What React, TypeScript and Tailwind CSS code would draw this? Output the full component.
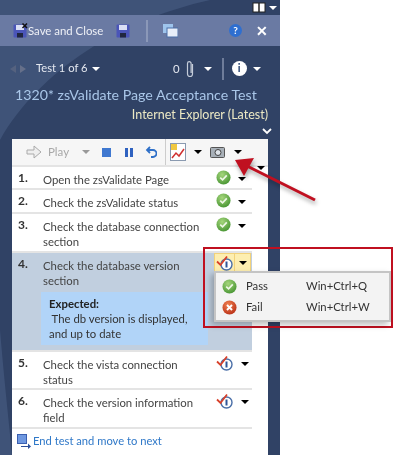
import React from 'react';

const FONT = "font-['Lato','Noto_Sans',sans-serif]";

const Caret = ({ className = '' }: { className?: string }) => (
    <span className={`inline-block w-0 h-0 border-x-[4px] border-x-transparent border-t-[4px] ${className}`} />
);

const PassIcon = ({ size = 15 }: { size?: number }) => (
    <svg className="shrink-0" width={size} height={size} viewBox="0 0 16 16">
        <defs>
            <radialGradient id="pass" cx="40%" cy="30%" r="80%">
                <stop offset="0%" stopColor="#a5d67c" />
                <stop offset="100%" stopColor="#3f8f2c" />
            </radialGradient>
        </defs>
        <circle cx="8" cy="8" r="7.5" fill="url(#pass)" />
        <path d="M4.5 8.2 7 10.5 11.5 5.8" fill="none" stroke="#eef7e6" strokeWidth="1.8" />
    </svg>
);

const FailIcon = () => (
    <svg className="shrink-0" width="15" height="15" viewBox="0 0 16 16">
        <defs>
            <radialGradient id="fail" cx="40%" cy="30%" r="80%">
                <stop offset="0%" stopColor="#f08050" />
                <stop offset="100%" stopColor="#b52a12" />
            </radialGradient>
        </defs>
        <circle cx="8" cy="8" r="7.5" fill="url(#fail)" />
        <path d="M5.3 5.3 10.7 10.7M10.7 5.3 5.3 10.7" stroke="#fff" strokeWidth="2" />
    </svg>
);

const ActiveIcon = () => (
    <svg className="shrink-0" width="18" height="16" viewBox="0 0 18 16">
        <circle cx="10.5" cy="9.5" r="5.5" fill="#fff" stroke="#4a6fa8" strokeWidth="1.4" />
        <path d="M10.5 6.500v6" stroke="#2f5597" strokeWidth="2" />
        <path d="M1 6.500 4.500 10 11 1.500" fill="none" stroke="#d8402a" strokeWidth="1.800" />
    </svg>
);

const DiskIcon = ({ closing = false }: { closing?: boolean }) => (
    <svg className="shrink-0" width="15" height="15" viewBox="0 0 15 15">
        <rect x="0.500" y="1.500" width="13" height="13" rx="1" fill="#4a55b8" />
        <rect x="3" y="2" width="8" height="5" fill="#d9def5" />
        <rect x="4" y="10" width="6" height="4.500" fill="#20263f" />
        {closing && <path d="M9.500 0.500 14 5M14 0.500 9.500 5" stroke="#111" strokeWidth="1.500" />}
    </svg>
);

interface Step {
    n: number;
    lines: string[];
    done: boolean;
}

const STEPS_TOP: Step[] = [
    { n: 1, lines: ['Open the zsValidate Page'], done: true },
    { n: 2, lines: ['Check the zsValidate status'], done: true },
    { n: 3, lines: ['Check the database connection', 'section'], done: true },
];

const STEPS_BOTTOM: Step[] = [
    { n: 5, lines: ['Check the vista connection', 'status'], done: false },
    { n: 6, lines: ['Check the version information', 'field'], done: false },
];

const StepRow: React.FC<{ step: Step; height: string }> = ({ step, height }) => (
    <div className={`flex ${height} border-b-2 border-[#e4e4e4] pt-[3px]`}>
        <span className="w-[31px] pl-[6px] text-[12px] leading-[15px] font-bold text-[#333]">{step.n}.</span>
        <div className="flex-1 leading-[15px] pt-[2px] text-[#444]">
            {step.lines.map(line => <div key={line}>{line}</div>)}
        </div>
        <div className="flex w-[40px] items-start pl-[4px] gap-[7px]">
            {step.done ? <PassIcon /> : <ActiveIcon />}
            <span className="pt-[1px] leading-none"><Caret className="border-t-black" /></span>
        </div>
    </div>
);

export default function App() {
    return (
        <div className={`relative flex h-[455px] w-[400px] overflow-hidden whitespace-nowrap bg-white text-[11.35px] blur-[0.35px] ${FONT}`}>
            <div className="relative w-[280px] shrink-0 bg-[#304265]">
                {/* background swoosh */}
                <svg className="absolute inset-0" width="280" height="455" viewBox="0 0 280 455">
                    <path d="M0 140 C40 70 120 20 210 0 L0 0Z" fill="#3f5378" />
                    <path d="M0 330 C6 400 10 430 12 455 L0 455Z" fill="#3f5378" />
                </svg>

                <div className="relative flex h-[15px] items-center justify-end gap-[3px] pr-[3px]">
                    <svg width="14" height="11" viewBox="0 0 14 11">
                        <rect x="1" y="1" width="12" height="9" fill="#fff" stroke="#222" />
                        <path d="M7 1v9" stroke="#222" strokeWidth="1.5" />
                    </svg>
                    <Caret className="border-t-white" />
                </div>

                <div className="relative flex h-[31px] items-center bg-[#6a7aa3] pl-[13px] text-[#eef0f6]">
                    <DiskIcon closing />
                    <span className="w-[88px] text-[11.4px]">Save and Close</span>
                    <DiskIcon />
                    <div className="ml-[15px] h-[22px] w-[2px] bg-[#8b98b8]" />
                    <svg className="ml-[15px]" width="15" height="15" viewBox="0 0 15 15">
                        <rect x="0" y="1" width="10" height="9" fill="#9ec4ec" />
                        <rect x="4" y="5" width="11" height="9" fill="#e8eef8" stroke="#4a6fa8" />
                    </svg>
                    <span className="ml-[51px] flex h-[13px] w-[13px] items-center justify-center rounded-full bg-[#2f6fd0] text-[10px] font-bold text-white">?</span>
                    <span className="ml-[14px] text-[14px] leading-none font-bold text-white">✕</span>
                </div>

                <div className="relative flex h-[39px] items-center pl-[10px] pt-[6px] text-[#e4e8f0]">
                    <span className="h-0 w-0 border-y-[4px] border-r-[6px] border-y-transparent border-r-[#55627f]" />
                    <span className="ml-[4px] h-0 w-0 border-y-[4px] border-l-[6px] border-y-transparent border-l-[#66708a]" />
                    <span className="ml-[10px] w-[56px] text-[11.2px]">Test 1 of 6</span>
                    <Caret className="border-t-white" />
                    <span className="ml-[73px]">0</span>
                    <svg className="ml-[5px]" width="10" height="18" viewBox="0 0 10 18">
                        <path d="M7.500 4v10a2.500 2.500 0 0 1-5 0V3.500a1.800 1.800 0 0 1 3.600 0V13" fill="none" stroke="#c4ccd9" strokeWidth="1.200" />
                    </svg>
                    <Caret className="ml-[9px] border-t-white" />
                    <div className="ml-[10px] h-[22px] w-[2px] bg-[#6f7d9a]" />
                    <span className="ml-[8px] flex h-[15px] w-[15px] items-center justify-center rounded-full bg-white text-[11px] font-bold text-[#24406f]">i</span>
                    <Caret className="ml-[6px] border-t-white" />
                </div>

                <div className="relative pl-[15px] text-[14.2px] leading-[20px] text-[#a9c6e8]">1320* zsValidate Page Acceptance Test</div>
                <div className="relative pr-[12px] pt-[1px] text-right text-[12.5px] leading-[18px] text-[#ece9c4]">Internet Explorer (Latest)</div>
                <div className="relative flex h-[15px] justify-end pr-[8px] pt-[2px]">
                    <svg width="10" height="10" viewBox="0 0 10 10">
                        <path d="M1 3 5 7 9 3" fill="none" stroke="#fff" strokeWidth="1.800" />
                    </svg>
                </div>

                <div className="relative mx-[12px] h-[316px] bg-white">
                    <div className="flex h-[28px] items-center border-b-2 border-[#e4e4e4] bg-[#f6f6f6] pl-[14px] text-[#a8a8a8]">
                        <svg width="16" height="14" viewBox="0 0 16 14">
                            <path d="M1 5h7V1l7 6-7 6V9H1z" fill="#eee" stroke="#aaa" />
                        </svg>
                        <span className="ml-[6px] w-[22px] text-[11.5px]">Play</span>
                        <Caret className="ml-[12px] border-t-[#999]" />
                        <span className="ml-[12px] h-[9px] w-[9px] bg-[#3f78d0]" />
                        <span className="ml-[14px] flex gap-[2px]">
                            <span className="h-[9px] w-[3px] bg-[#2f62c0]" />
                            <span className="h-[9px] w-[3px] bg-[#2f62c0]" />
                        </span>
                        <svg className="ml-[12px]" width="12" height="12" viewBox="0 0 12 12">
                            <path d="M3 4h5a3 3 0 0 1 0 7H6M5 1 2 4l3 3" fill="none" stroke="#2f70c8" strokeWidth="1.800" />
                        </svg>
                        <div className="ml-[8px] h-[26px] w-[1px] bg-[#ccc]" />
                        <svg className="ml-[4px]" width="16" height="18" viewBox="0 0 16 18">
                            <rect x="0.500" y="0.500" width="15" height="17" fill="#fff" stroke="#8a9ab0" />
                            <rect x="1" y="1" width="6" height="6" fill="#f0c840" />
                            <path d="M2 15 6 10 9 13 14 6" fill="none" stroke="#d03030" strokeWidth="1.500" />
                        </svg>
                        <Caret className="ml-[8px] border-t-black" />
                        <svg className="ml-[8px]" width="15" height="12" viewBox="0 0 15 12">
                            <rect x="0.500" y="1.500" width="14" height="10" rx="1" fill="#a8b0b8" stroke="#555" />
                            <circle cx="8" cy="6.500" r="3" fill="#dfe4ea" stroke="#444" />
                        </svg>
                        <Caret className="ml-[9px] border-t-black" />
                    </div>
                    <span className="absolute right-[3px] top-[21px] leading-none"><Caret className="border-t-black" /></span>

                    <div className="w-[240px]">
                        <StepRow step={STEPS_TOP[0]} height="h-[23px]" />
                        <StepRow step={STEPS_TOP[1]} height="h-[24px]" />
                        <StepRow step={STEPS_TOP[2]} height="h-[39px]" />

                        <div className="flex h-[99px] border-b-2 border-[#e4e4e4] bg-[#c1cfdf] pt-[3px]">
                            <span className="w-[31px] pl-[6px] text-[12px] leading-[15px] font-bold text-[#333]">4.</span>
                            <div className="flex-1 pt-[2px] leading-[15px] text-[#444]">
                                <div>Check the database version</div>
                                <div>section</div>
                                <div className="ml-[-2px] mt-[4px] h-[53px] w-[167px] bg-[#b1d4f8] py-[4px] pl-[8px] text-[#333]">
                                    <div className="font-bold text-[#222]">Expected:</div>
                                    <div>&nbsp;The db version is displayed,</div>
                                    <div>and up to date</div>
                                </div>
                            </div>
                        </div>

                        <StepRow step={STEPS_BOTTOM[0]} height="h-[38px]" />
                        <StepRow step={STEPS_BOTTOM[1]} height="h-[39px]" />
                    </div>

                    <div className="flex items-center pl-[5px] pt-[4px] text-[11.2px] text-[#2f78c8]">
                        <svg width="14" height="15" viewBox="0 0 14 15">
                            <rect x="0.500" y="0.500" width="9" height="9" fill="#6f98e0" stroke="#3a5fb0" />
                            <path d="M4 12h7V9.500l3 3-3 2.500V13H4z" fill="#2c4f9a" />
                        </svg>
                        <span className="ml-[2px]">End test and move to next</span>
                    </div>
                </div>
            </div>

            {/* callout over the panel */}
            <div className="absolute left-[203px] top-[247px] h-[81px] w-[190px] border-2 border-[#c01020]">
                <div className="absolute left-[9px] top-[4px] flex h-[19px] w-[37px] border border-[#f2d27a] bg-[#fdeeb0]">
                    <div className="flex w-[20px] items-center justify-center border-r border-[#f2d27a]"><ActiveIcon /></div>
                    <div className="flex flex-1 items-center justify-center"><Caret className="border-t-black" /></div>
                </div>
                <div className="absolute left-[9px] top-[22px] h-[51px] w-[177px] border-2 border-[#c4c4c4] bg-[#f3f3f3] text-[11.3px] text-[#333] shadow-[-3px_3px_6px_rgba(0,0,0,0.25)]">
                    <div className="flex h-[23px] items-center pl-[6px] pt-[3px]">
                        <PassIcon />
                        <span className="ml-[9px] w-[60px]">Pass</span>
                        <span>Win+Ctrl+Q</span>
                    </div>
                    <div className="flex h-[23px] items-center pl-[6px]">
                        <FailIcon />
                        <span className="ml-[9px] w-[60px]">Fail</span>
                        <span>Win+Ctrl+W</span>
                    </div>
                </div>
            </div>

            {/* red arrow */}
            <svg className="absolute left-[230px] top-[150px] drop-shadow-[1px_3px_2px_rgba(0,0,0,0.35)]" width="100" height="60" viewBox="0 0 100 60">
                <path d="M15 15 85 50" stroke="#c01020" strokeWidth="3" />
                <path d="M5 10 24 8 14 26Z" fill="#c01020" />
            </svg>
        </div>
    );
}
